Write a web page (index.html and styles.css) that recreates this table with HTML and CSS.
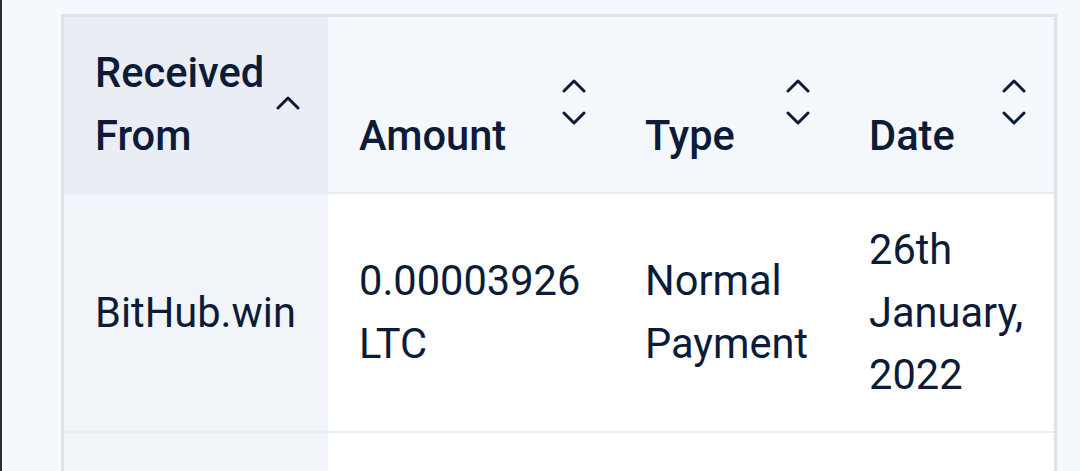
FILE: index.html
```html
<!DOCTYPE html>
<html lang="en">
<head>
<meta charset="utf-8">
<title>Received payments</title>
<link rel="stylesheet" href="styles.css">
</head>
<body>
<div class="page">
  <table class="tx">
    <colgroup>
      <col class="c1"><col class="c2"><col class="c3"><col class="c4">
    </colgroup>
    <thead>
      <tr>
        <th class="sorted">
          <div class="th-inner">
            <span class="label">Received<br>From</span>
            <svg class="sort one" viewBox="0 0 24 14" width="24" height="14"><polyline points="2,12 12,2 22,12"/></svg>
          </div>
        </th>
        <th>
          <div class="th-inner">
            <span class="label">Amount</span>
            <svg class="sort" viewBox="0 0 24 48" width="24" height="48"><polyline points="2,13 12,3 22,13"/><polyline points="2,35 12,45 22,35"/></svg>
          </div>
        </th>
        <th>
          <div class="th-inner">
            <span class="label">Type</span>
            <svg class="sort" viewBox="0 0 24 48" width="24" height="48"><polyline points="2,13 12,3 22,13"/><polyline points="2,35 12,45 22,35"/></svg>
          </div>
        </th>
        <th>
          <div class="th-inner">
            <span class="label">Date</span>
            <svg class="sort" viewBox="0 0 24 48" width="24" height="48"><polyline points="2,13 12,3 22,13"/><polyline points="2,35 12,45 22,35"/></svg>
          </div>
        </th>
      </tr>
    </thead>
    <tbody>
      <tr>
        <td class="sorted">BitHub.win</td>
        <td>0.00003926 LTC</td>
        <td>Normal Payment</td>
        <td>26th January, 2022</td>
      </tr>
      <tr class="next">
        <td class="sorted"></td>
        <td></td>
        <td></td>
        <td></td>
      </tr>
    </tbody>
  </table>
</div>
</body>
</html>
```

FILE: styles.css
```css
html, body {
  margin: 0;
  padding: 0;
  height: 100%;
  overflow: hidden;
}
body {
  background: #f5f8fd;
  border-left: 2px solid #2a2d33;
  font-family: Roboto, "Noto Sans", sans-serif;
  color: #0c1c38;
}
.page {
  padding: 14px 0 0 59px;
}
.tx {
  width: 996px;
  table-layout: fixed;
  border-collapse: separate;
  border-spacing: 0;
  border: 3px solid #dde2eb;
  border-bottom: none;
  font-size: 41.6px;
  line-height: 62.5px;
}
.c1 { width: 264px; }
.c2 { width: 286px; }
.c3 { width: 224px; }
.c4 { width: 216px; }

th {
  background: #f4f7fc;
  padding: 24px 28px 25px 31px;
  text-align: left;
  font-weight: 500;
  vertical-align: bottom;
  border-bottom: 2px solid #e6ecf4;
}
th.sorted { background: #eaeef4; }
.th-inner {
  height: 126px;
  display: flex;
  align-items: center;
  justify-content: space-between;
}
.label {
  align-self: flex-end;
}
.sort {
  flex: none;
  fill: none;
  stroke: #0c1c38;
  stroke-width: 3;
  stroke-linecap: round;
  stroke-linejoin: round;
  margin-top: -4px;
}
.sort.one { margin-top: -2px; }

td {
  background: #ffffff;
  padding: 25px 28px 24px 31px;
  vertical-align: middle;
  font-weight: 400;
  border-bottom: 2px solid #e8eef6;
}
td.sorted { background: #f1f4f8; }
tr.next td { height: 200px; }
```
